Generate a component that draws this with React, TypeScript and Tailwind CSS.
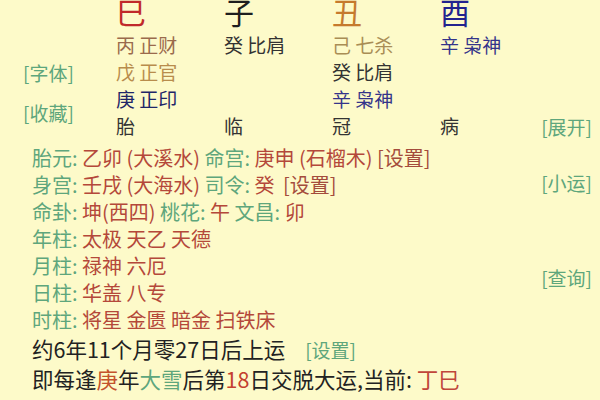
import React from "react";

const font = { fontFamily: '"Noto Sans CJK SC", "Noto Sans", sans-serif' };

function Cell({ children, className = "" }: { children?: React.ReactNode; className?: string }) {
  return <div className={className}>{children}</div>;
}

export default function App() {
  const g = "text-[#5ea67c]";
  const r = "text-[#b4483a]";
  return (
    <div className="w-[600px] h-[400px] overflow-hidden bg-[#fdfac9] flex" style={font}>
      <div className="flex-1 flex flex-col min-w-0">
        {/* top section */}
        <div className="flex">
          <div className={`w-[116px] shrink-0 flex flex-col pl-[23px] pt-[59px] gap-[13px] text-[19px] leading-[27px] whitespace-nowrap ${g}`}>
            <div>[字体]</div>
            <div>[收藏]</div>
          </div>
          <div className="flex flex-col">
            <div className="grid grid-cols-[108px_108px_108px_108px] h-[34px] -mt-[6px] text-[30px] leading-[34px]">
              <Cell className="text-[#c0292a]">巳</Cell>
              <Cell className="text-[#1e1e1e]">子</Cell>
              <Cell className="text-[#c57a2d]">丑</Cell>
              <Cell className="text-[#23238f]">酉</Cell>
            </div>
            <div className="grid grid-cols-[108px_108px_108px_108px] text-[19px] leading-[27px] mt-[3px] whitespace-nowrap">
              <Cell className="text-[#9a6a4c]">丙 正财</Cell>
              <Cell className="text-[#333333]">癸 比肩</Cell>
              <Cell className="text-[#a98d55]">己 七杀</Cell>
              <Cell className="text-[#34348a]">辛 枭神</Cell>

              <Cell className="text-[#b88c4c]">戊 正官</Cell>
              <Cell />
              <Cell className="text-[#333333]">癸 比肩</Cell>
              <Cell />

              <Cell className="text-[#1f2668]">庚 正印</Cell>
              <Cell />
              <Cell className="text-[#34348a]">辛 枭神</Cell>
              <Cell />

              <Cell className="text-[#333333]">胎</Cell>
              <Cell className="text-[#333333]">临</Cell>
              <Cell className="text-[#333333]">冠</Cell>
              <Cell className="text-[#333333]">病</Cell>
            </div>
          </div>
        </div>

        {/* lower section */}
        <div className="flex flex-col pl-[32px] mt-[5px] text-[20px] leading-[27px] whitespace-nowrap">
          <div>
            <span className={g}>胎元: </span>
            <span className={r}>乙卯 (大溪水) </span>
            <span className={g}>命宫: </span>
            <span className={r}>庚申 (石榴木) </span>
            <span className="text-[#a44c3c]">[设置]</span>
          </div>
          <div>
            <span className={g}>身宫: </span>
            <span className={r}>壬戌 (大海水) </span>
            <span className={g}>司令: </span>
            <span className={r}>癸 </span>
            <span className="text-[#a44c3c] ml-[4px]">[设置]</span>
          </div>
          <div>
            <span className={g}>命卦: </span>
            <span className={r}>坤(西四) </span>
            <span className={g}>桃花: </span>
            <span className={r}>午 </span>
            <span className={g}>文昌: </span>
            <span className={r}>卯</span>
          </div>
          <div>
            <span className={g}>年柱: </span>
            <span className={r}>太极 天乙 天德</span>
          </div>
          <div>
            <span className={g}>月柱: </span>
            <span className={r}>禄神 六厄</span>
          </div>
          <div>
            <span className={g}>日柱: </span>
            <span className={r}>华盖 八专</span>
          </div>
          <div>
            <span className={g}>时柱: </span>
            <span className={r}>将星 金匮 暗金 扫铁床</span>
          </div>
          <div className="text-[21.5px] leading-[29px] text-[#222222] mt-[1px]">
            约6年11个月零27日后上运
            <span className={`${g} ml-[20px] text-[19px]`}>[设置]</span>
          </div>
          <div className="text-[21.5px] leading-[30px] text-[#222222]">
            即每逢<span className="text-[#c4522c]">庚</span>年<span className={g}>大雪</span>后第<span className="text-[#c4402e]">18</span>日交脱大运,当前: <span className="text-[#c0463a]">丁巳</span>
          </div>
        </div>
      </div>

      {/* right column */}
      <div className={`w-[64px] shrink-0 flex flex-col items-end pr-[8px] pt-[113px] text-[19px] leading-[27px] whitespace-nowrap ${g}`}>
        <div>[展开]</div>
        <div className="mt-[29px]">[小运]</div>
        <div className="mt-[68px]">[查询]</div>
      </div>
    </div>
  );
}
